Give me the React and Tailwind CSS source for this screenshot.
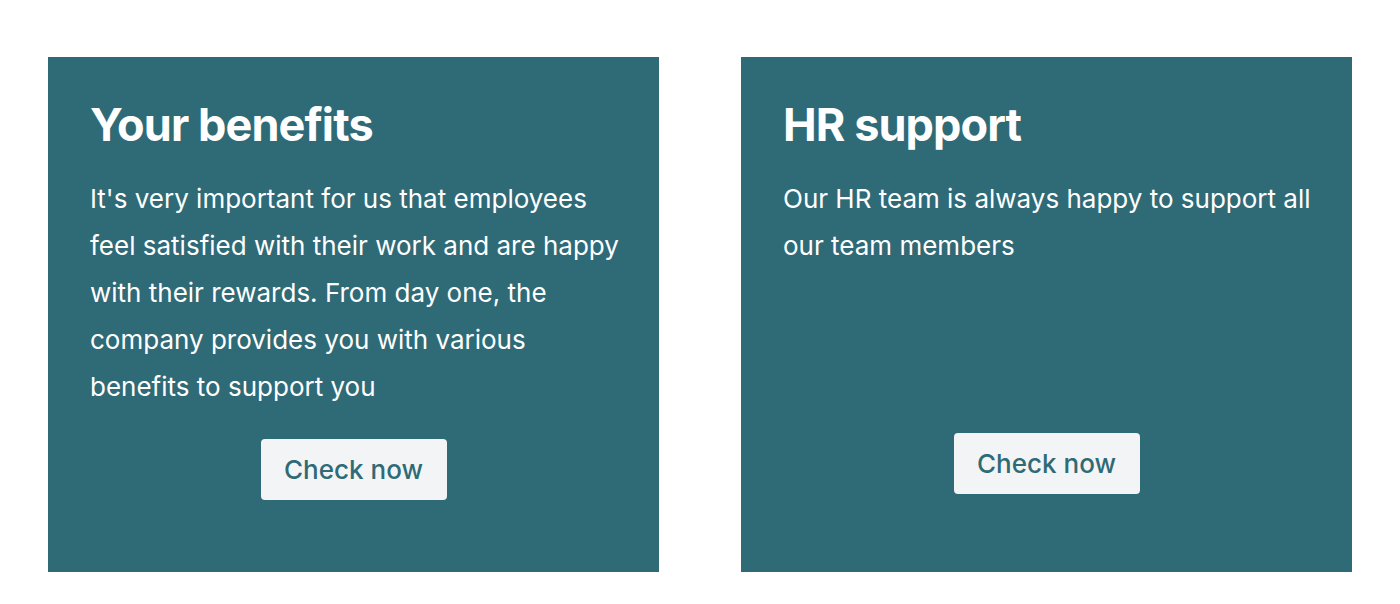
const cards = [
  {
    title: "Your benefits",
    text: "It's very important for us that employees feel satisfied with their work and are happy with their rewards. From day one, the company provides you with various benefits to support you",
    bodyHeight: "h-[264px]",
  },
  {
    title: "HR support",
    text: "Our HR team is always happy to support all our team members",
    bodyHeight: "h-[258px]",
  },
]

function InfoCard({ card }) {
  return (
    <div className="w-[611px] h-[515px] bg-[#2f6a77] text-white pl-[42px] pr-[30px] pt-[38px] flex flex-col">
      <h2 className="text-[45px] leading-[60px] font-bold tracking-[-0.02em]">{card.title}</h2>
      <div className={card.bodyHeight + " mt-[20px]"}>
        <p className="text-[26px] leading-[47px] text-white">{card.text}</p>
      </div>
      <div className="flex justify-center pr-[12px]">
        <button className="w-[186px] h-[61px] bg-[#f3f4f6] rounded-[4px] text-[26px] font-medium text-[#2f6a77]">
          Check now
        </button>
      </div>
    </div>
  )
}

export default function App() {
  return (
    <div className="min-h-[604px] bg-white pt-[57px] pl-[48px] flex gap-[82px]" style={{ fontFamily: "Inter, 'Noto Sans', sans-serif" }}>
      {cards.map((card) => (
        <InfoCard key={card.title} card={card} />
      ))}
    </div>
  )
}
